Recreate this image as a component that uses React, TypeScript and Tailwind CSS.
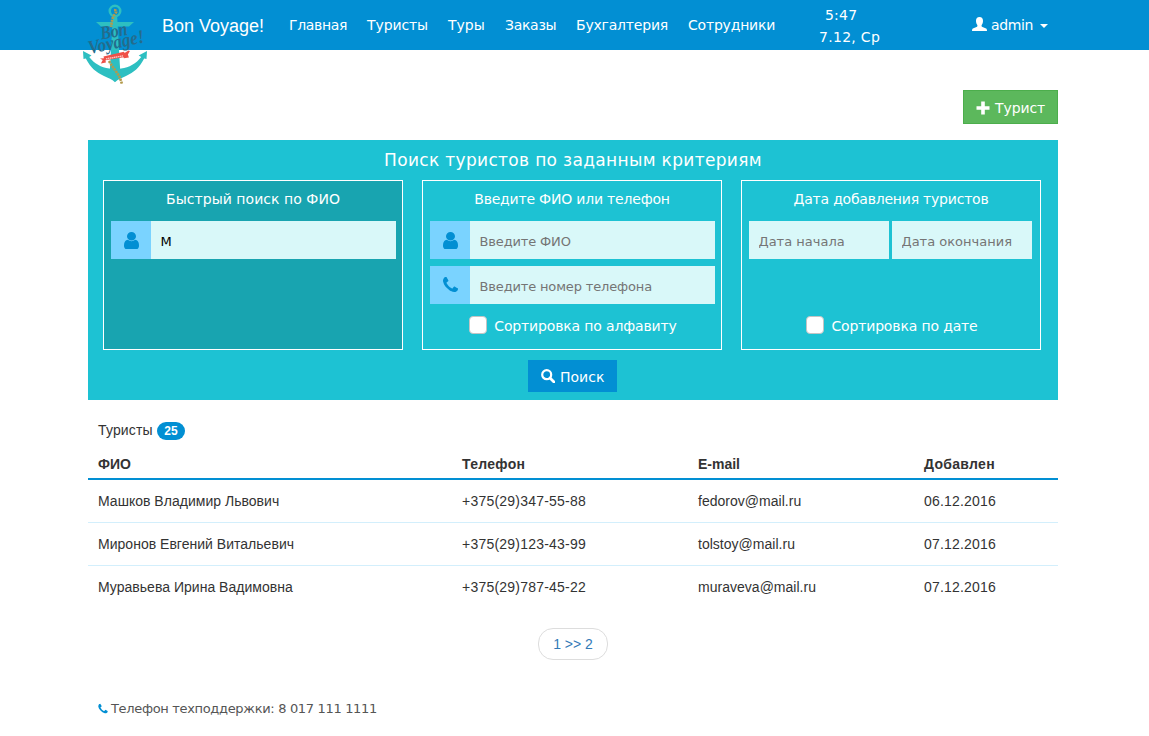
import React from "react";

const USER_PATH =
  "M1536 1399q0 109-62.5 187t-150.5 78h-854q-88 0-150.5-78t-62.5-187q0-85 8.5-160.5t31.5-152 58.5-131 94-89 134.5-34.5q131 128 313 128t313-128q76 0 134.5 34.5t94 89 58.5 131 31.5 152 8.5 160.5zm-256-887q0 159-112.5 271.5t-271.5 112.5-271.5-112.5-112.5-271.5 112.5-271.5 271.5-112.5 271.5 112.5 112.5 271.5z";
const PHONE_PATH =
  "M1600 1240q0 27-10 70.5t-21 68.5q-21 50-122 106-94 51-186 51-27 0-53-3.5t-57.5-12.5-47-14.5-55.5-20.5-49-18q-98-35-175-83-127-79-264-216t-216-264q-48-77-83-175-3-9-18-49t-20.5-55.5-14.5-47-12.5-57.5-3.5-53q0-92 51-186 56-101 106-122 25-11 68.5-21t70.5-10q14 0 21 3 18 6 53 76 11 19 30 54t35 63.5 31 53.5q3 4 17.5 25t21.5 35.5 7 28.5q0 20-28.5 50t-62 55-62 53-28.5 46q0 9 5 22.5t8.5 20.5 14 24 11.5 19q76 137 174 235t235 174q2 1 19 11.5t24 14 20.5 8.5 22.5 5q18 0 46-28.5t53-62 55-62 50-28.5q14 0 28.5 7t35.5 21.5 25 17.5q25 15 53.5 31t63.5 35 54 30q70 35 76 53 3 7 3 21z";

function FaIcon({
  path,
  className,
  viewBox = "0 0 1792 1792",
}: {
  path: string;
  className: string;
  viewBox?: string;
}) {
  return (
    <svg viewBox={viewBox} preserveAspectRatio="none" className={className} fill="currentColor">
      <path d={path} />
    </svg>
  );
}

function Logo() {
  return (
    <svg viewBox="0 0 66 86" className="h-[86px] w-[66px] overflow-visible">
      <g fill="#2dbfc1">
        <path
          fillRule="evenodd"
          d="M33 4.500a6.500 6.500 0 1 1 0 13a6.500 6.500 0 1 1 0-13zm0 2.500a4 4 0 1 0 0 8a4 4 0 1 0 0-8z"
        />
        <path d="M30.800 17h4.400l3 54h-10.400z" />
        <path d="M14 22h38l-5 4.600h-28z" />
        <path d="M1 51l8.500 4.500-2.300 1.500c5 6.500 12 10.500 20 11.500l6 1 6-1c8-1 15-5 20-11.500l-2.500-1.500L65 51l-.5 8-2.300-.6c-5 9.600-10.200 13.600-18.200 17.600-4.500 2-8 3.500-11 6.200-3-2.700-6.500-4.200-11-6.200-8-4-13.200-8-18.200-17.600l-2.300.6z" />
      </g>
      <path
        d="M32 10q4 0 1 4t-3 7l-1 6M27 61q3 5 6 9t5 8l2 6"
        fill="none"
        stroke="#b39a4b"
        strokeWidth="2.600"
        strokeDasharray="2.200 .8"
      />
      <g fill="#246c8c">
        <text
          transform="translate(19.500 39.500) rotate(-10)"
          textLength="27"
          lengthAdjust="spacingAndGlyphs"
          className="font-['Liberation_Serif',serif] text-[19px] font-bold italic"
        >
          Bon
        </text>
        <text
          transform="translate(7.500 54) rotate(-12)"
          textLength="57"
          lengthAdjust="spacingAndGlyphs"
          className="font-['Liberation_Serif',serif] text-[19px] font-bold italic"
        >
          Voyage!
        </text>
      </g>
      <path
        d="M18 58.500l4-.3-.5-1.700 20.500-4.700.6 1.200 3.800-2.500 1.500.5-2 3.500 1 3-5 .700-.4-1-18 3.100.4 2.200-5 .9 1.800-3.400z"
        fill="#ef5148"
      />
      <path d="M24 58.800l17-2.900" stroke="#fbd0cb" strokeWidth="1.200" strokeDasharray="1.500 .5" />
    </svg>
  );
}

const NAV = [
  { label: "Главная", width: "w-[58px]", tracking: "tracking-[-0.35px]" },
  { label: "Туристы", width: "w-[61px]", tracking: "tracking-[-0.1px]" },
  { label: "Туры", width: "w-[37px]", tracking: "tracking-normal" },
  { label: "Заказы", width: "w-[51px]", tracking: "tracking-[-0.3px]" },
  { label: "Бухгалтерия", width: "w-[92px]", tracking: "tracking-[-0.2px]" },
  { label: "Сотрудники", width: "w-[88px]", tracking: "tracking-[-0.2px]" },
];

const COLUMNS = [
  { title: "ФИО", cell: "tracking-[0.02px]", head: "tracking-normal" },
  { title: "Телефон", cell: "tracking-[0.22px]", head: "tracking-[0.3px]" },
  { title: "E-mail", cell: "tracking-[0.02px]", head: "tracking-normal" },
  { title: "Добавлен", cell: "tracking-[0.2px]", head: "tracking-[0.3px]" },
];

const ROWS = [
  ["Машков Владимир Львович", "+375(29)347-55-88", "fedorov@mail.ru", "06.12.2016"],
  ["Миронов Евгений Витальевич", "+375(29)123-43-99", "tolstoy@mail.ru", "07.12.2016"],
  ["Муравьева Ирина Вадимовна", "+375(29)787-45-22", "muraveva@mail.ru", "07.12.2016"],
];

const GRID = "grid grid-cols-[364px_236px_226px_144px]";

function Field({
  icon,
  placeholder,
  value,
}: {
  icon: "user" | "phone";
  placeholder?: string;
  value?: string;
}) {
  return (
    <div className="flex h-[38px] w-[285px]">
      <div className="flex w-10 items-center justify-center bg-[#7ad3ff] pl-px text-[#028fd3]">
        {icon === "user" ? (
          <FaIcon path={USER_PATH} viewBox="256 128 1280 1536" className="h-[17px] w-[15px]" />
        ) : (
          <FaIcon path={PHONE_PATH} viewBox="192 128 1408 1408" className="-mt-[2px] h-[15px] w-[15px]" />
        )}
      </div>
      <input
        className="min-w-0 flex-1 bg-[#d9f8f9] pl-[9.500px] pt-[3px] text-[13px] tracking-[-0.15px] text-black outline-none placeholder:text-[#757575]"
        defaultValue={value}
        placeholder={placeholder}
      />
    </div>
  );
}

function SortOption({ label }: { label: string }) {
  return (
    <label className="flex h-[22px] items-center justify-center pl-[2px] text-sm tracking-[-0.15px] text-white">
      <span className="mr-[7px] -mt-[2px] h-[18px] w-[18px] rounded-[4px] border border-[#c4c4c4] bg-white" />
      {label}
    </label>
  );
}

export default function App() {
  return (
    <div className="h-[736px] w-[1149px] overflow-hidden bg-white font-['DejaVu_Sans',sans-serif] text-[#333]">
      <header className="h-[50px] bg-[#028fd3] text-sm text-white">
        <div className="flex h-[50px] pl-[82px]">
          <div className="w-20 shrink-0">
            <Logo />
          </div>
          <div className="w-[127px] shrink-0 pt-[13px] font-['Liberation_Sans',sans-serif] text-[18px] leading-[26px]">
            Bon Voyage!
          </div>
          <nav className="flex gap-5 pt-[14px] leading-[22px]">
            {NAV.map((n) => (
              <a key={n.label} className={`${n.width} ${n.tracking} shrink-0 whitespace-nowrap`}>
                {n.label}
              </a>
            ))}
          </nav>
          <div className="ml-[43px] w-[140px] shrink-0 pt-1 leading-[22px]">
            <div className="pl-[6px] tracking-[0.2px]">5:47</div>
            <div className="tracking-[0.3px]">7.12, Ср</div>
          </div>
          <div className="ml-[13px] flex h-[50px] shrink-0 items-center">
            <svg viewBox="0 0 15 15" className="-mt-[2px] h-[15px] w-[15px]" fill="currentColor">
              <path d="M7.500 0C9.800 0 11 1.500 11 3.800c0 1.300-.3 2.700-1 3.700-.5.800-.7 1.700 0 2.200 1.200.8 3.500 1.100 4.500 2.100.4.400.5 1.200.5 2.200H0c0-1 .1-1.800.5-2.200 1-1 3.300-1.300 4.500-2.100.7-.5.500-1.400 0-2.200-.7-1-1-2.400-1-3.700C4 1.500 5.200 0 7.500 0z" />
            </svg>
            <span className="ml-1 w-[42px] tracking-[-0.35px]">admin</span>
            <span className="ml-[7px] mt-[2px] border-x-4 border-t-4 border-x-transparent border-t-white" />
          </div>
        </div>
      </header>

      <main className="ml-[88px] w-[970px]">
        <div className="flex h-[90px] justify-end pt-10">
          <button className="flex h-[34px] w-[95px] items-center border border-[#4cae4c] bg-[#5cb85c] pl-[12px] pt-px text-sm tracking-[-0.1px] text-white">
            <svg viewBox="0 0 14 14" className="mr-[5px] h-[14px] w-[14px]" fill="currentColor">
              <path d="M5.200.500h3.600v4.700h4.700v3.600H8.800v4.700H5.200V8.800H.500V5.200h4.700z" />
            </svg>
            Турист
          </button>
        </div>

        <section className="h-[260px] bg-[#1dc2d3]">
          <h1 className="h-10 pt-[7px] text-center text-[17px] leading-[26px] tracking-[0.33px] text-white">
            Поиск туристов по заданным критериям
          </h1>
          <div className="flex gap-[19px] pl-[15px]">
            <div className="h-[170px] w-[300px] border border-white bg-[#18a4b0] px-[7px]">
              <h2 className="h-10 pt-[7px] text-center text-sm leading-[22px] tracking-[0.04px] text-white">
                Быстрый поиск по ФИО
              </h2>
              <Field icon="user" value="М" />
            </div>
            <div className="h-[170px] w-[300px] border border-white px-[7px]">
              <h2 className="h-10 pt-[7px] text-center text-sm leading-[22px] tracking-[-0.2px] text-white">
                Введите ФИО или телефон
              </h2>
              <div className="mb-[11px] flex flex-col gap-[7px]">
                <Field icon="user" placeholder="Введите ФИО" />
                <Field icon="phone" placeholder="Введите номер телефона" />
              </div>
              <SortOption label="Сортировка по алфавиту" />
            </div>
            <div className="h-[170px] w-[300px] border border-white px-[7px]">
              <h2 className="h-10 pt-[7px] text-center text-sm leading-[22px] tracking-[-0.22px] text-white">
                Дата добавления туристов
              </h2>
              <div className="mb-[56px] flex gap-[3px]">
                <input
                  className="h-[38px] w-[140px] bg-[#d9f8f9] px-[9.500px] pt-[3px] text-[13px] placeholder:text-[#757575]"
                  placeholder="Дата начала"
                />
                <input
                  className="h-[38px] w-[140px] bg-[#d9f8f9] px-[9.500px] pt-[3px] text-[13px] placeholder:text-[#757575]"
                  placeholder="Дата окончания"
                />
              </div>
              <SortOption label="Сортировка по дате" />
            </div>
          </div>
          <button className="ml-[440px] mt-[10px] flex h-8 w-[89px] items-center bg-[#028fd3] pl-[13px] pt-[2px] text-sm text-white">
            <svg viewBox="0 0 14 14" className="mr-[5px] -mt-[2px] h-[14px] w-[14px]" fill="none" stroke="currentColor">
              <circle cx="5.700" cy="5.700" r="4.500" strokeWidth="2.200" />
              <path d="M9 9l4 4" strokeWidth="2.800" strokeLinecap="round" />
            </svg>
            Поиск
          </button>
        </section>

        <section className="font-['Liberation_Sans',sans-serif] text-sm leading-5">
          <div className="flex h-[54px] items-start pl-[10px] pt-5">
            <span className="w-[59px] tracking-[0.15px]">Туристы</span>
            <span className="mt-[2px] flex h-[18px] w-7 items-center justify-center rounded-full bg-[#028fd3] text-xs font-bold text-white">
              25
            </span>
          </div>
          <div className={`${GRID} h-[26px] border-b-2 border-[#028fd3] font-bold`}>
            {COLUMNS.map((c) => (
              <div key={c.title} className={`pl-[10px] ${c.head}`}>
                {c.title}
              </div>
            ))}
          </div>
          {ROWS.map((row, i) => (
            <div
              key={row[0]}
              className={`${GRID} h-[43px] pt-[11px] ${i < 2 ? "border-b border-[#d3effc]" : ""}`}
            >
              {row.map((cell, c) => (
                <div key={cell} className={`pl-[10px] ${COLUMNS[c].cell}`}>
                  {cell}
                </div>
              ))}
            </div>
          ))}
          <div className="mt-[19px] flex">
            <a className="ml-[450px] flex h-8 w-[70px] items-center justify-center rounded-[15px] border border-[#ddd] text-[#337ab7]">
              1 &gt;&gt; 2
            </a>
          </div>
        </section>

        <footer className="mt-[38px] flex h-[22px] items-center pl-[9px] text-[13px] tracking-[-0.33px] text-[#555]">
          <FaIcon path={PHONE_PATH} className="mr-[2px] h-3 w-3 text-[#028fd3]" />
          Телефон техподдержки: 8 017 111 1111
        </footer>
      </main>
    </div>
  );
}
